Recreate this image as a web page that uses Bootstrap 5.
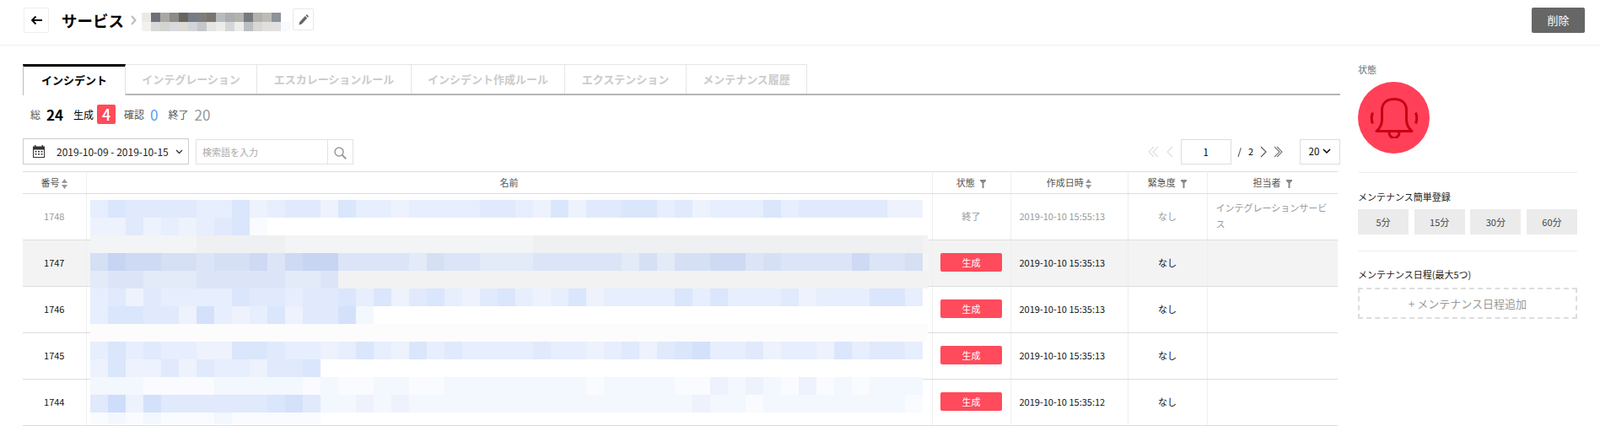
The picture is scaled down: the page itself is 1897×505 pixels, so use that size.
<!DOCTYPE html>
<html lang="ja">
<head>
  <meta charset="UTF-8">
  <title>サービス</title>
  <link href="https://cdn.jsdelivr.net/npm/bootstrap@5.3.3/dist/css/bootstrap.min.css" rel="stylesheet">
  <style>
    html, body {
      height: 505px;
      overflow: hidden;
    }
    body {
      font-family: "Noto Sans CJK JP", "Liberation Sans", sans-serif;
      font-size: 11px;
      color: #222;
      background: #fff;
    }
    /* header */
    .page-head {
      height: 54px;
      padding: 9px 18px 0 28px;
      border-bottom: 1px solid #eee;
    }
    .back-btn {
      width: 30px;
      height: 30px;
      border: 1px solid #eee;
      border-radius: 2px;
      background: #fff;
      padding: 0;
    }
    .head-title {
      margin: 0 0 0 15px;
      font-size: 18.5px;
      font-weight: 700;
      line-height: 30px;
      color: #000;
    }
    .head-sep { margin: 9px 6px 0 8px; }
    .name-mosaic { margin-top: 6px; width: 172px; }
    .mosaic-line { display: flex; }
    .name-mosaic .mosaic-line { height: 11px; }
    .name-mosaic .mosaic-line > div { width: 11px; flex: none; }
    .edit-btn {
      width: 25px;
      height: 26px;
      margin: 1px 0 0 7px;
      border: 1px solid #e8e8e8;
      border-radius: 2px;
      background: #fff;
      padding: 0;
    }
    .del-btn {
      width: 63px;
      height: 30px;
      padding: 0;
      border: 0;
      border-radius: 2px;
      background: #666;
      color: #fff;
      font-size: 13px;
    }
    /* main */
    .main-col { width: 1562px; margin-left: 27px; padding-top: 22px; }
    .side-col { width: 260px; margin-left: 21px; padding-top: 20px; }
    /* tabs */
    .svc-tabs {
      height: 37px;
      border-bottom: 2px solid #b5b5b5;
      flex-wrap: nowrap;
    }
    .svc-tabs .nav-item:nth-child(1) .nav-link { width: 122px; }
    .svc-tabs .nav-item:nth-child(2) .nav-link { width: 156px; }
    .svc-tabs .nav-item:nth-child(3) .nav-link { width: 183px; }
    .svc-tabs .nav-item:nth-child(4) .nav-link { width: 182px; }
    .svc-tabs .nav-item:nth-child(5) .nav-link { width: 144px; }
    .svc-tabs .nav-item:nth-child(6) .nav-link { width: 143px; }
    .svc-tabs .nav-link {
      height: 35px;
      margin: 0;
      padding: 0;
      text-align: center;
      font-size: 13px;
      font-weight: 700;
      line-height: 34px;
      color: #ccc;
      background: #fff;
      border: 0;
      border-top: 1px solid #e5e5e5;
      border-right: 1px solid #e5e5e5;
      border-radius: 0;
    }
    .svc-tabs .nav-link.active {
      height: 37px;
      color: #000;
      line-height: 32px;
      border-top: 3px solid #000;
      border-left: 1px solid #bbb;
    }
    /* counters */
    .stat-row { height: 23px; margin: 11px 0 0 9px; }
    .stat-label { font-size: 12px; color: #555; }
    .stat-num { margin-left: 7px; font-size: 17px; line-height: 23px; }
    .stat-total { color: #000; font-weight: 700; }
    .stat-confirm { color: #5b9bf5; }
    .stat-done { color: #999; }
    .stat-gen { margin-left: 12px; color: #000; }
    .stat-next { margin-left: 10px; }
    .stat-next-wide { margin-left: 12px; }
    .stat-new {
      width: 22px;
      height: 23px;
      margin-left: 4px;
      border-radius: 2px;
      background: #ff4b5c;
      color: #fff;
      font-size: 18px;
      font-weight: 500;
      line-height: 23px;
      text-align: center;
    }
    /* toolbar */
    .tool-row { height: 31px; margin-top: 17px; }
    .date-btn {
      width: 197px;
      height: 31px;
      padding: 0 0 0 11px;
      border: 1px solid #ccc;
      background: #fff;
      color: #222;
      font-size: 12px;
    }
    .date-btn .date-text { margin-left: 14px; }
    .search-box {
      width: 187px;
      height: 30px;
      margin: 1px 0 0 8px;
      border: 1px solid #e2e2e2;
    }
    .search-box input {
      flex: 1;
      min-width: 0;
      height: 100%;
      padding: 0 7px;
      border: 0;
      border-right: 1px solid #e2e2e2;
      font-size: 11px;
    }
    .search-box input::placeholder { color: #aaa; }
    .search-go { width: 29px; text-align: center; }
    .page-num {
      width: 60px;
      height: 30px;
      margin: 0 8px 0 9px;
      border: 1px solid #ddd;
      line-height: 28px;
      text-align: center;
      font-size: 11.5px;
      color: #000;
    }
    .page-size {
      width: 48px;
      height: 30px;
      margin-left: 20px;
      border: 1px solid #ddd;
      font-size: 11.5px;
      color: #000;
    }
    /* table */
    .table-wrap { position: relative; width: 1559px; margin-top: 8px; }
    .inc-table {
      width: 1559px;
      margin: 0;
      table-layout: fixed;
      border-top: 1px solid #ddd;
    }
    .inc-table col:nth-child(1) { width: 75px; }
    .inc-table col:nth-child(2) { width: 1003px; }
    .inc-table col:nth-child(3) { width: 93px; }
    .inc-table col:nth-child(4) { width: 139px; }
    .inc-table col:nth-child(5) { width: 94px; }
    .inc-table col:nth-child(6) { width: 155px; }
    .inc-table th, .inc-table td {
      padding: 0;
      border-bottom: 1px solid #ddd;
      text-align: center;
      vertical-align: middle;
      font-size: 11px;
      font-weight: 400;
      color: #222;
    }
    .inc-table th + th, .inc-table td + td { border-left: 1px solid #eee; }
    .inc-table th { height: 26px; color: #555; }
    .inc-table td { height: 55px; padding-bottom: 2px; color: #111; }
    .inc-table tr.row-done td { color: #999; }
    .inc-table tr.row-hover td { background: #f3f3f3; }
    .inc-table td.date-cell { text-align: left; padding-left: 10px; }
    .inc-table td.owner-cell { text-align: left; padding: 0 10px 2px; line-height: 19px; }
    .state-new {
      display: block;
      width: 73px;
      height: 22px;
      margin: 0 auto;
      padding: 0;
      border-radius: 2px;
      background: #ff4b5c;
      color: #fff;
      font-size: 11px;
      font-weight: 400;
      line-height: 22px;
    }
    .name-cover { position: absolute; left: 80px; top: 34px; }
    .name-cover .mosaic-line > div { width: 21px; flex: none; }
    /* sidebar */
    .side-label { font-size: 11px; line-height: 16px; color: #222; }
    .state-circle {
      width: 85px;
      height: 85px;
      margin-top: 7px;
      border-radius: 50%;
      background: #ff4058;
    }
    .side-line { margin: 22px 0 0; border: 0; border-top: 1px solid #eee; opacity: 1; }
    .side-line-2 { margin-top: 19px; }
    .side-head { margin-top: 20px; }
    .side-head-2 { margin-top: 19px; }
    .quick-row { margin-top: 7px; }
    .quick-btn {
      width: 60px;
      height: 30px;
      padding: 0;
      border: 0;
      border-radius: 0;
      background: #ebebeb;
      color: #444;
      font-size: 11px;
    }
    .add-box {
      height: 37px;
      margin-top: 8px;
      border: 2px dashed #ddd;
      color: #999;
      font-size: 13px;
      line-height: 33px;
      text-align: center;
    }
  </style>
</head>
<body>
  <!-- Header -->
  <div class="page-head d-flex align-items-start">
    <button class="back-btn d-flex align-items-center justify-content-center">
      <svg width="15" height="12" viewBox="0 0 15 12" fill="none" stroke="#000" stroke-width="1.8"><path d="M14 6H2M6.500 1.500 2 6l4.500 4.500"/></svg>
    </button>
    <h1 class="head-title">サービス</h1>
    <svg class="head-sep" width="7" height="12" viewBox="0 0 7 12" fill="none" stroke="#bbb" stroke-width="2"><path d="m1 1 4.500 5L1 11"/></svg>
    <div class="name-mosaic" id="titleMosaic"></div>
    <button class="edit-btn d-flex align-items-center justify-content-center">
      <svg width="12" height="13" viewBox="0 0 12 12" fill="#666" preserveAspectRatio="none"><path d="M0.500 11.500 1.300 8.300 7.800 1.800 10.200 4.200 3.700 10.700ZM8.500 1.100 9.300 0.300Q9.700 0 10.100 0.300L11.700 1.900Q12 2.300 11.700 2.700L10.900 3.500Z"/></svg>
    </button>
    <button class="del-btn ms-auto">削除</button>
  </div>

  <div class="d-flex">
    <div class="main-col">
      <!-- Tabs -->
      <ul class="nav nav-tabs svc-tabs">
        <li class="nav-item"><a class="nav-link active" href="#">インシデント</a></li>
        <li class="nav-item"><a class="nav-link" href="#">インテグレーション</a></li>
        <li class="nav-item"><a class="nav-link" href="#">エスカレーションルール</a></li>
        <li class="nav-item"><a class="nav-link" href="#">インシデント作成ルール</a></li>
        <li class="nav-item"><a class="nav-link" href="#">エクステンション</a></li>
        <li class="nav-item"><a class="nav-link" href="#">メンテナンス履歴</a></li>
      </ul>

      <!-- Counters -->
      <div class="stat-row d-flex align-items-center">
        <span class="stat-label">総</span>
        <span class="stat-num stat-total">24</span>
        <span class="stat-label stat-gen">生成</span>
        <span class="stat-new">4</span>
        <span class="stat-label stat-next">確認</span>
        <span class="stat-num stat-confirm">0</span>
        <span class="stat-label stat-next-wide">終了</span>
        <span class="stat-num stat-done">20</span>
      </div>

      <!-- Toolbar -->
      <div class="tool-row d-flex">
        <button class="date-btn d-flex align-items-center">
          <svg width="14" height="15" viewBox="0 0 14 15"><path fill="#333" d="M0 1.500h14V15H0Z"/><path fill="#fff" d="M1 5.500h12V14H1Z"/><path fill="#333" d="M2 0h1.500v3H2ZM10.500 0H12v3h-1.500ZM2.500 7h2v1.500h-2ZM6 7h2v1.500H6ZM9.500 7h2v1.500h-2ZM2.500 10h2v1.500h-2ZM6 10h2v1.500H6ZM9.500 10h2v1.500h-2Z"/></svg>
          <span class="date-text">2019-10-09 - 2019-10-15</span>
          <svg class="ms-2" width="9" height="6" viewBox="0 0 9 6" fill="none" stroke="#333" stroke-width="1.300"><path d="m1 1 3.500 3.500L8 1"/></svg>
        </button>
        <div class="search-box d-flex align-items-center">
          <input type="text" placeholder="検索語を入力">
          <div class="search-go">
            <svg width="15" height="15" viewBox="0 0 15 15" fill="none" stroke="#999" stroke-width="1.500"><circle cx="6" cy="6" r="5"/><path d="m9.700 9.700 4.500 4.500" stroke-width="2"/></svg>
          </div>
        </div>
        <div class="ms-auto d-flex align-items-center">
          <svg width="14" height="14" viewBox="0 0 14 14" fill="none" stroke="#ddd" stroke-width="1.100"><path d="M7 1 1 7l6 6M12 1 6 7l6 6"/></svg>
          <svg class="ms-2" width="8" height="14" viewBox="0 0 8 14" fill="none" stroke="#ddd" stroke-width="1.100"><path d="M7 1 1 7l6 6"/></svg>
          <div class="page-num">1</div>
          <span class="text-black">/</span>
          <span class="text-black ms-2">2</span>
          <svg class="ms-2" width="8" height="14" viewBox="0 0 8 14" fill="none" stroke="#555" stroke-width="1.100"><path d="m1 1 6 6-6 6"/></svg>
          <svg class="ms-2" width="11" height="14" viewBox="0 0 11 14" fill="none" stroke="#777" stroke-width="1.100"><path d="m1 1 6 6-6 6M4 1l6 6-6 6"/></svg>
          <div class="page-size d-flex align-items-center justify-content-center gap-1">
            <span>20</span>
            <svg width="10" height="7" viewBox="0 0 10 7" fill="none" stroke="#000" stroke-width="1.500"><path d="m1 1 4 4 4-4"/></svg>
          </div>
        </div>
      </div>

      <!-- Table -->
      <div class="table-wrap">
        <table class="table inc-table">
          <colgroup>
            <col><col><col><col><col><col>
          </colgroup>
          <thead>
            <tr>
              <th>番号 <svg width="7" height="12" viewBox="0 0 7 12" fill="#999"><path d="M3.500 0 7 5H0ZM0 7h7l-3.500 5Z"/></svg></th>
              <th>名前</th>
              <th>状態 <svg class="ms-1" width="7" height="10" viewBox="0 0 7 10" fill="#888"><path d="M0 0h7v1.500L4.500 4v6h-2V4L0 1.500Z"/></svg></th>
              <th>作成日時 <svg width="7" height="12" viewBox="0 0 7 12" fill="#999"><path d="M3.500 0 7 5H0ZM0 7h7l-3.500 5Z"/></svg></th>
              <th>緊急度 <svg class="ms-1" width="7" height="10" viewBox="0 0 7 10" fill="#888"><path d="M0 0h7v1.500L4.500 4v6h-2V4L0 1.500Z"/></svg></th>
              <th>担当者 <svg class="ms-1" width="7" height="10" viewBox="0 0 7 10" fill="#888"><path d="M0 0h7v1.500L4.500 4v6h-2V4L0 1.500Z"/></svg></th>
            </tr>
          </thead>
          <tbody id="incidentRows"></tbody>
        </table>
        <div class="name-cover" id="nameCover"></div>
      </div>
    </div>

    <!-- Sidebar -->
    <div class="side-col">
      <div class="side-label text-secondary">状態</div>
      <div class="state-circle d-flex align-items-center justify-content-center">
        <svg width="58" height="48" viewBox="0 0 58 48" fill="none" stroke="#c90014" stroke-width="3">
          <path d="M8 39.500C13 35 14.500 31 14.500 26V15C14.500 6 20.500 1.500 29 1.500S43.500 6 43.500 15V26C43.500 31 45 35 50 39.500Z" stroke-linejoin="round"/>
          <path d="M23.500 40a5.800 5.800 0 1 0 11 0"/>
          <path d="M3.500 17.500q-2.500 6.500 0 13M54.500 17.500q2.500 6.500 0 13"/>
        </svg>
      </div>
      <hr class="side-line">
      <div class="side-label side-head">メンテナンス簡単登録</div>
      <div class="quick-row d-flex justify-content-between">
        <button class="quick-btn">5分</button>
        <button class="quick-btn">15分</button>
        <button class="quick-btn">30分</button>
        <button class="quick-btn">60分</button>
      </div>
      <hr class="side-line side-line-2">
      <div class="side-label side-head-2">メンテナンス日程(最大5つ)</div>
      <div class="add-box">+ メンテナンス日程追加</div>
    </div>
  </div>

  <script>
    const rows = [
      { no: 1748, state: "終了", date: "2019-10-10 15:55:13", owner: "インテグレーションサービス", cls: "row-done" },
      { no: 1747, state: "生成", date: "2019-10-10 15:35:13", owner: "", cls: "row-hover" },
      { no: 1746, state: "生成", date: "2019-10-10 15:35:13", owner: "", cls: "" },
      { no: 1745, state: "生成", date: "2019-10-10 15:35:13", owner: "", cls: "" },
      { no: 1744, state: "生成", date: "2019-10-10 15:35:12", owner: "", cls: "" }
    ];

    document.getElementById("incidentRows").innerHTML = rows.map(r => `
      <tr class="${r.cls}">
        <td>${r.no}</td>
        <td></td>
        <td>${r.state === "生成" ? `<span class="badge state-new">${r.state}</span>` : r.state}</td>
        <td class="date-cell">${r.date}</td>
        <td>なし</td>
        <td class="owner-cell">${r.owner}</td>
      </tr>`).join("");

    // title mosaic
    const titleCells = [
      ["ece9e5","6d7078","a9a8a3","8c8b85","6a645e","767c86","7c7e7d","79756e","b8babd","abadb0","b3b2ad","767a7d","b3b1ab","bdbbb5","8c919a"],
      ["f2f1ef","d8d8d8","d3d3d1","d8dade","dcdbd2","d2d4d9","c4c6c8","e5e5e5","ecedeb","d5d6d8","edeeec","bcbec1","d9d7d3","dfdfdf","e0e0e0","f8fbfe"]
    ];
    document.getElementById("titleMosaic").innerHTML = titleCells.map(line =>
      `<div class="mosaic-line">${line.map(c => `<div style="background:#${c}"></div>`).join("")}</div>`
    ).join("");

    // name column mosaic: one digit per cell, 0 = only the line fill
    const blue = [200,217,250];
    const bands = [
      { base: blue, d: "465555446345536443444455" + "4" + "3635566453444645555533" },
      { base: blue, d: "3353434561" },
      { base: [220,221,226], fill: "#f3f3f3", wide: 1, d: "33333344444333333333333334444444444444444444444" },
      { base: [192,208,240], fill: "#f5f5f5", wide: 1, d: "687766566757885555465544" + "4" + "5555546466775655557556" },
      { base: [192,208,240], fill: "#f2f2f2", wide: 1, d: "45544455555445" },
      { base: blue, d: "453544446554556463564356" + "4" + "3463444464644453444664" },
      { base: blue, d: "4665537434635572" },
      { base: blue, fill: "#fcfcfc", wide: 1, d: "0" },
      { base: blue, d: "464544336654434643645444" + "4" + "5443453567445344364554" },
      { base: blue, d: "3633535443556" },
      { base: blue, d: "222111122222121122112222" + "2" + "2221222211323213121222" },
      { base: blue, d: "583755555567522323222222" + "2" + "2222222223221222222221" },
      { base: blue, h: 14, d: "1212111211111" }
    ];

    function mix(base, digit) {
      const t = digit / 9;
      return `rgb(${base.map(v => Math.round(255 + (v - 255) * t)).join(",")})`;
    }

    document.getElementById("nameCover").innerHTML = bands.map(b => {
      const cells = b.d.slice(0, 47).split("").map(x =>
        x === "0" ? "<div></div>" : `<div style="background:${mix(b.base, +x)}"></div>`
      ).join("");
      return `<div class="mosaic-line" style="height:${b.h || 21}px;width:${b.wide ? 993 : 987}px;background:${b.fill || "transparent"}">${cells}</div>`;
    }).join("");
  </script>
  <script src="https://cdn.jsdelivr.net/npm/bootstrap@5.3.3/dist/js/bootstrap.bundle.min.js"></script>
</body>
</html>
